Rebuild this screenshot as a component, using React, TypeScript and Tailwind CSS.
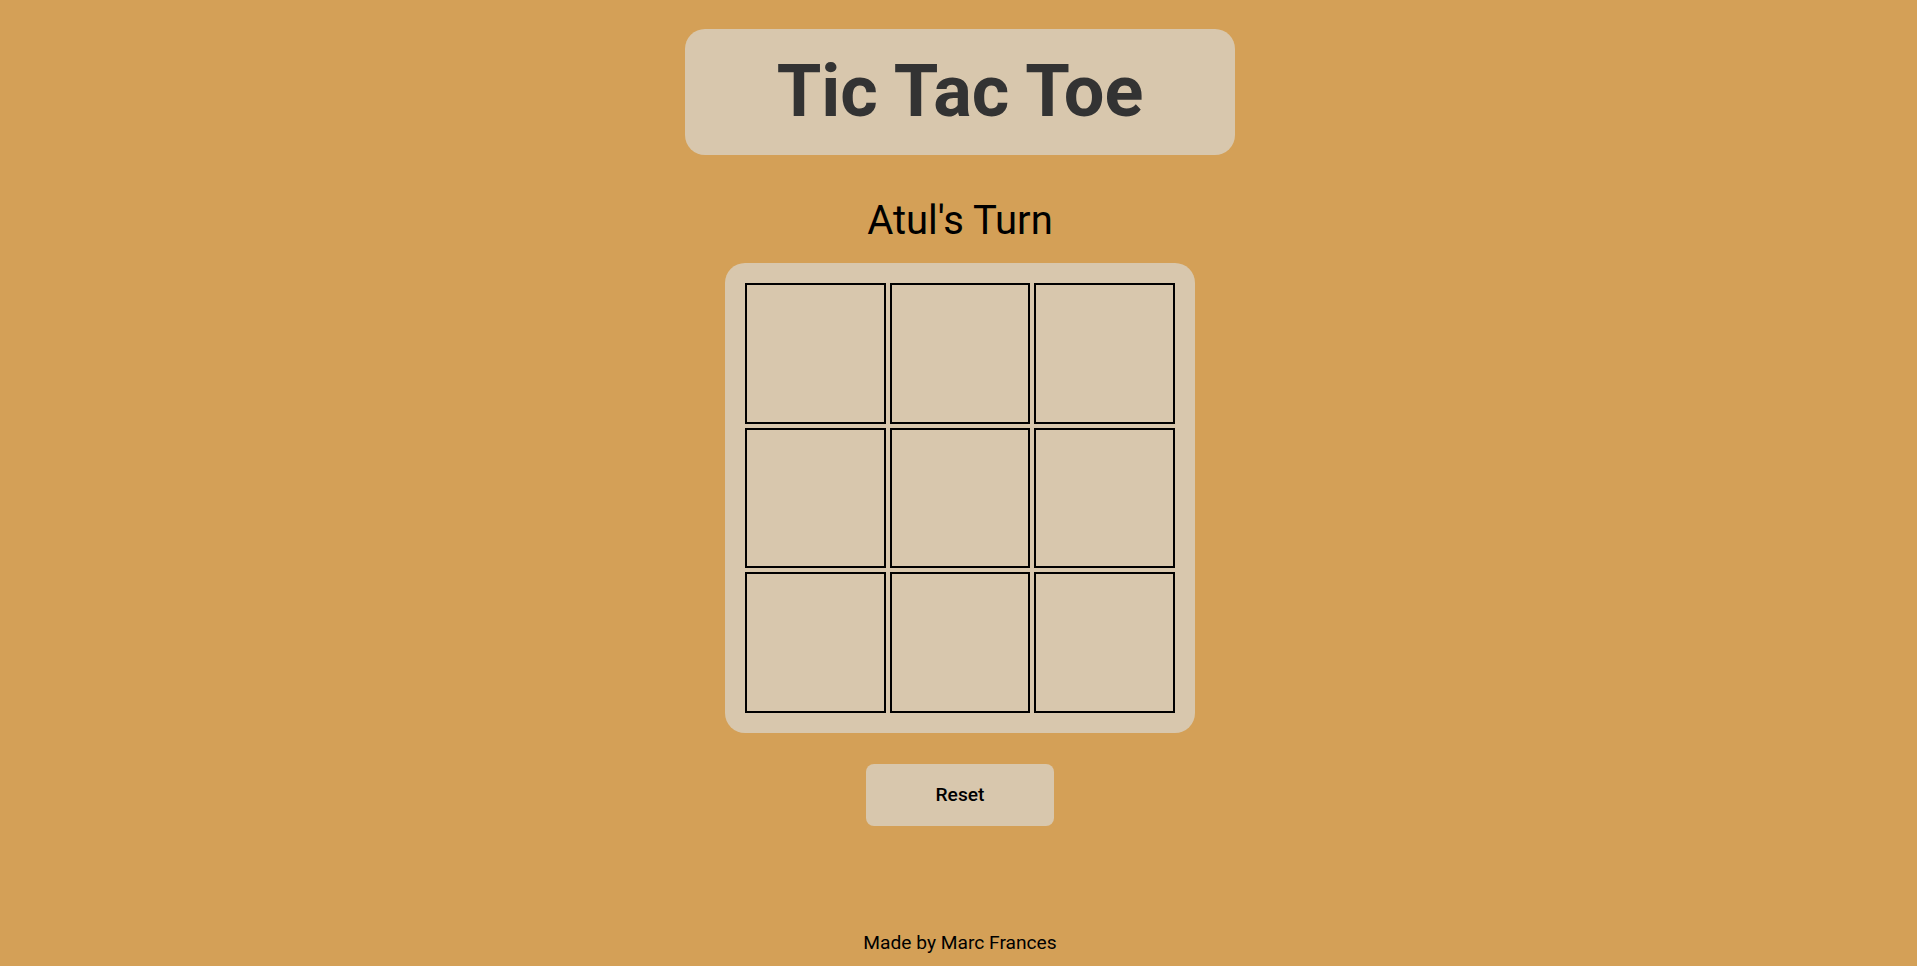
import { useState } from 'react'

type Cell = 'X' | 'O' | null

const players = ['Atul', 'Marc']

export default function App() {
  const [cells, setCells] = useState<Cell[]>(Array(9).fill(null))
  const [turn, setTurn] = useState(0)

  const play = (i: number) => {
    if (cells[i]) return
    const next = [...cells]
    next[i] = turn === 0 ? 'X' : 'O'
    setCells(next)
    setTurn(turn === 0 ? 1 : 0)
  }

  const reset = () => {
    setCells(Array(9).fill(null))
    setTurn(0)
  }

  return (
    <div className="flex min-h-screen flex-col items-center bg-[#d4a057] pl-[3px] pt-[29px] font-['Roboto',sans-serif]">
      <header className="flex h-[126px] w-[550px] items-center justify-center rounded-[20px] bg-[#d8c7ad]">
        <h1 className="text-[72px] font-bold leading-normal text-[#333333]">
          Tic Tac Toe
        </h1>
      </header>

      <h2 className="mt-[36px] text-[40px] leading-normal text-black">
        {players[turn]}'s Turn
      </h2>

      <div className="mt-[12px] grid w-[470px] grid-cols-3 gap-1 rounded-[20px] bg-[#d8c7ad] p-5">
        {cells.map((c, i) => (
          <button
            key={i}
            onClick={() => play(i)}
            className="flex aspect-square items-center justify-center border-2 border-black text-6xl font-bold text-[#333333]"
          >
            {c}
          </button>
        ))}
      </div>

      <button
        onClick={reset}
        className="mt-[31px] h-[62px] w-[188px] rounded-lg bg-[#d8c7ad] text-[19.2px] font-medium text-black"
      >
        Reset
      </button>

      <footer className="mt-auto pb-2 text-[19.2px] leading-normal text-black">
        Made by Marc Frances
      </footer>
    </div>
  )
}
